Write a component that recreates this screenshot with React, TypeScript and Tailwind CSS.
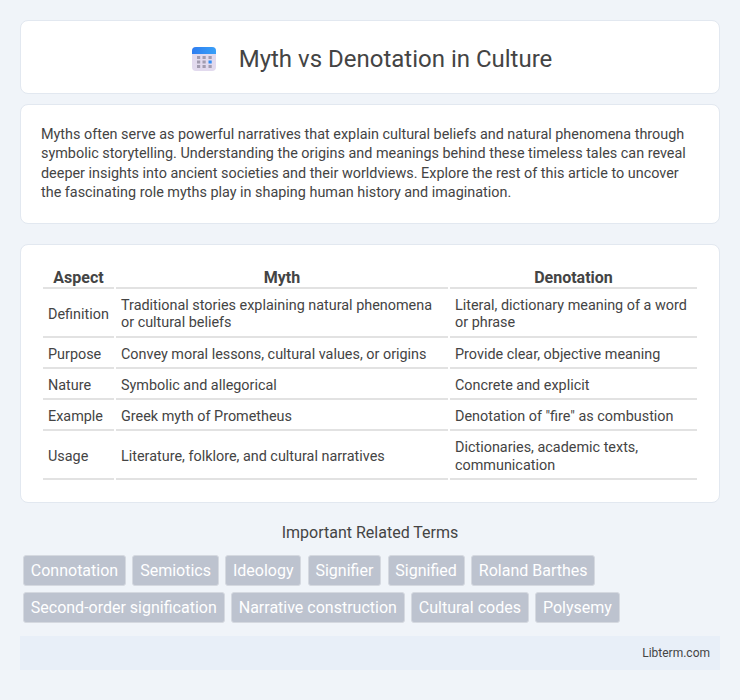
const rows = [
  ["Definition", "Traditional stories explaining natural phenomena or cultural beliefs", "Literal, dictionary meaning of a word or phrase"],
  ["Purpose", "Convey moral lessons, cultural values, or origins", "Provide clear, objective meaning"],
  ["Nature", "Symbolic and allegorical", "Concrete and explicit"],
  ["Example", "Greek myth of Prometheus", 'Denotation of "fire" as combustion'],
  ["Usage", "Literature, folklore, and cultural narratives", "Dictionaries, academic texts, communication"],
]

const terms = [
  "Connotation",
  "Semiotics",
  "Ideology",
  "Signifier",
  "Signified",
  "Roland Barthes",
  "Second-order signification",
  "Narrative construction",
  "Cultural codes",
  "Polysemy",
]

function CalendarIcon() {
  return (
    <svg width="24" height="24" viewBox="0 0 24 24" className="shrink-0">
      <defs>
        <linearGradient id="cal-top" x1="0" y1="0" x2="1" y2="0">
          <stop offset="0" stopColor="#2f7df0" />
          <stop offset="1" stopColor="#38a0f8" />
        </linearGradient>
      </defs>
      <rect x="0" y="0" width="24" height="24" rx="4" fill="#e2daee" />
      <path d="M0 7V4a4 4 0 0 1 4-4h16a4 4 0 0 1 4 4v3z" fill="url(#cal-top)" />
      {[9, 13.5, 18].map((y) =>
        [5, 10.5, 16.5].map((x) => (
          <rect
            key={`${x}-${y}`}
            x={x}
            y={y}
            width="3.2"
            height="3"
            fill={x === 16.5 && y === 13.5 ? "#2f8cf5" : "#a29cb0"}
          />
        )),
      )}
    </svg>
  )
}

export default function App() {
  return (
    <div className="min-h-screen bg-[#f0f4f9] p-5 font-['Roboto',sans-serif] text-[#444]">
      <header className="flex h-[74px] items-center justify-center gap-[23px] rounded-lg border border-[#e2e8f0] bg-white pt-[3px] pl-[4px]">
        <CalendarIcon />
        <h1 className="text-2xl font-normal text-[#444]">Myth vs Denotation in Culture</h1>
      </header>

      <section className="mt-[10px] rounded-lg border border-[#e2e8f0] bg-white px-5 py-5 text-[14.4px] leading-[19.44px] text-[#444]">
        Myths often serve as powerful narratives that explain cultural beliefs and natural phenomena through symbolic
        storytelling. Understanding the origins and meanings behind these timeless tales can reveal deeper insights into
        ancient societies and their worldviews. Explore the rest of this article to uncover the fascinating role myths
        play in shaping human history and imagination.
      </section>

      <section className="mt-5 rounded-lg border border-[#e2e8f0] bg-white px-5 py-5">
        <table className="w-full border-separate border-spacing-[2px] text-[14.4px] leading-[1.2]">
          <thead>
            <tr>
              <th className="w-[71px] border-b-2 border-[#e2e2e2] pt-px text-center text-[16px] font-bold">Aspect</th>
              <th className="w-[332px] border-b-2 border-[#e2e2e2] pt-px text-center text-[16px] font-bold">Myth</th>
              <th className="border-b-2 border-[#e2e2e2] pt-px text-center text-[16px] font-bold">Denotation</th>
            </tr>
          </thead>
          <tbody>
            {rows.map((row) => (
              <tr key={row[0]}>
                {row.map((cell) => (
                  <td key={cell} className="border-b-2 border-[#e2e2e2] px-[5px] pt-[6px] pb-[4px] align-middle">
                    {cell}
                  </td>
                ))}
              </tr>
            ))}
          </tbody>
        </table>
      </section>

      <h2 className="mt-5 text-center text-base font-normal leading-[19px] text-[#444]">Important Related Terms</h2>

      <div className="mt-[13px] flex flex-wrap gap-x-[6.4px] gap-y-[6px] px-[3px]">
        {terms.map((term) => (
          <span
            key={term}
            className="rounded-[3px] border border-[#d5d9e0] bg-[#bdc3cf] px-[6.8px] py-[5px] text-base leading-[19px] text-white"
          >
            {term}
          </span>
        ))}
      </div>

      <footer className="mt-[13px] flex h-[34px] items-center justify-end bg-[#e8eff8] px-[10px] text-xs text-[#444]">
        Libterm.com
      </footer>
    </div>
  )
}
